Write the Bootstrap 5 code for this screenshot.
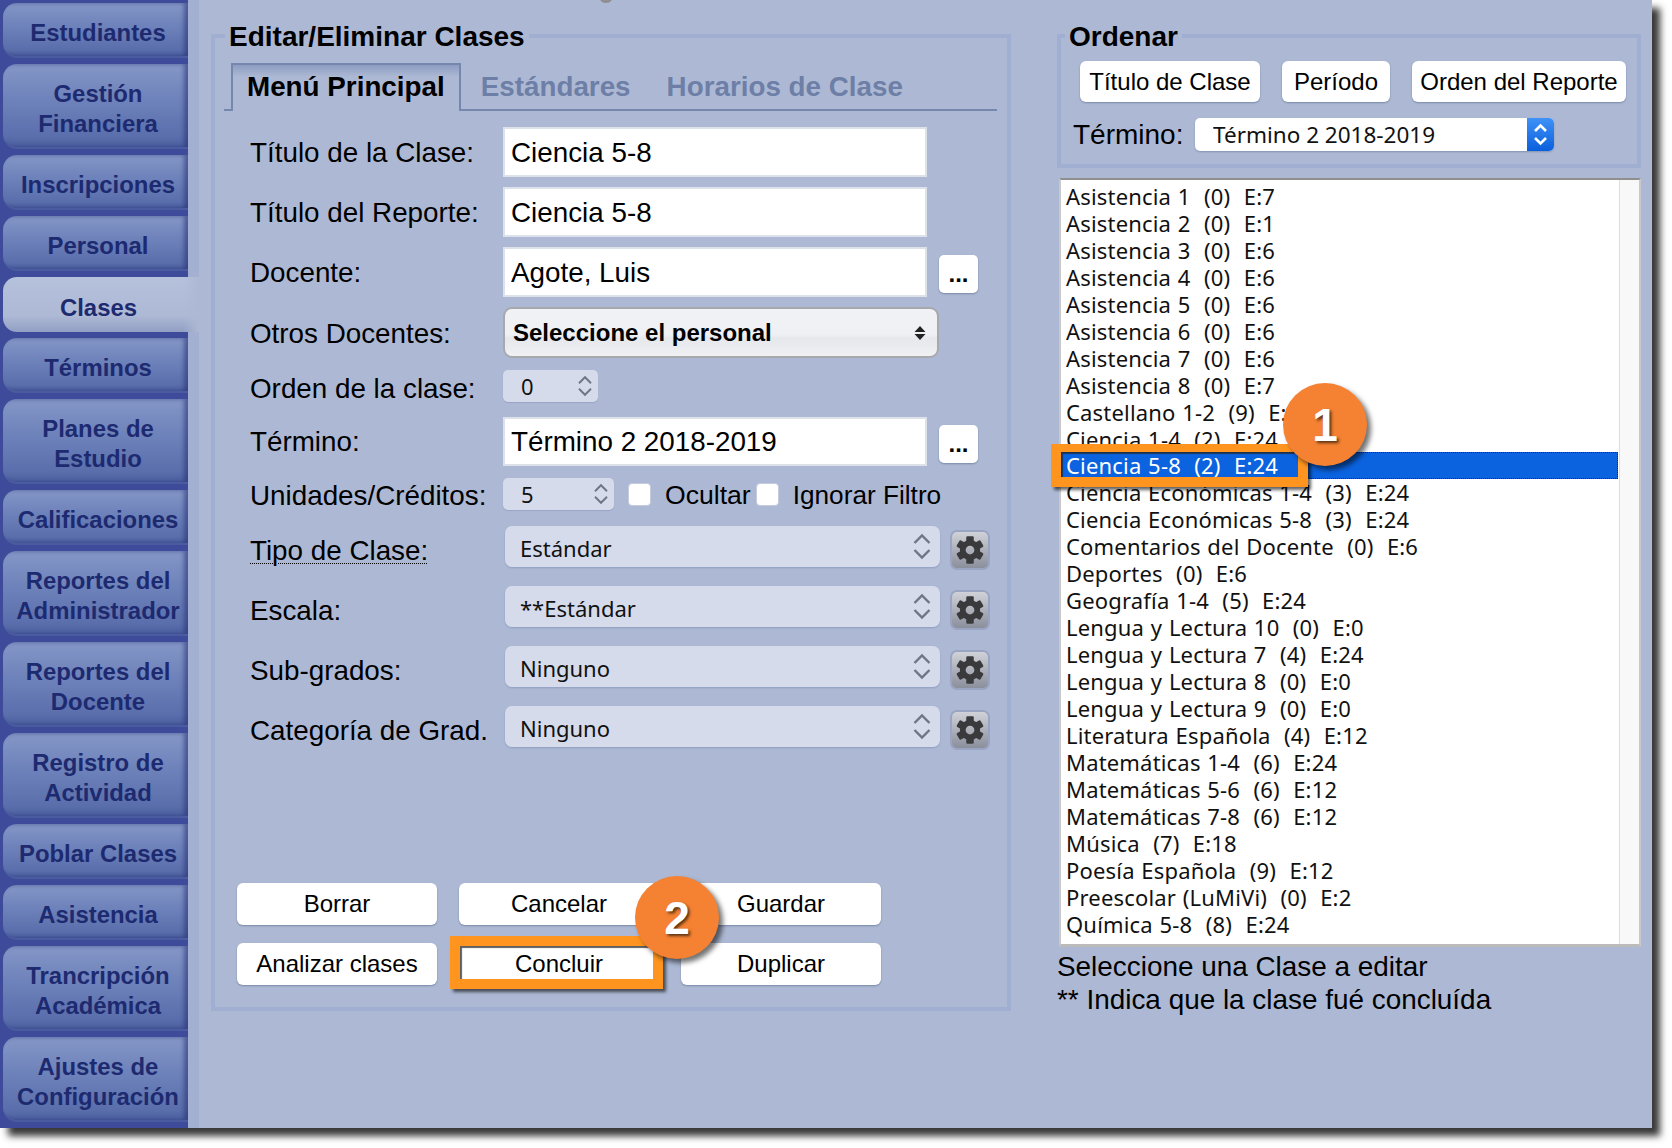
<!DOCTYPE html>
<html lang="es">
<head>
<meta charset="utf-8">
<title>Editar/Eliminar Clases</title>
<link rel="stylesheet" href="https://cdn.jsdelivr.net/npm/bootstrap@5.3.0/dist/css/bootstrap.min.css">
<style>
html,body{margin:0;background:#fff;overflow:hidden;height:100%}
body{font-family:"Liberation Sans",Arial,sans-serif;color:#000}
.app-win{width:1652px;height:1128px;background:#adb9d4;box-shadow:8px 8px 7px rgba(0,0,0,.78);position:relative}
.side-col{width:188px;background:#3d4b9a;padding:3px 0 0 3px;gap:6px;flex:none;position:relative;z-index:2}
.side-btn{height:55px;padding:7px 0 0 5px;font-size:23.9px;font-weight:700;line-height:30.5px;color:#1d2a70;text-align:center;text-decoration:none;border-radius:14px 0 0 14px;background:linear-gradient(#8597c7 0,#6d81ba 45%,#5a6eac 88%,#4b5e9e 100%);box-shadow:inset -4px 0 4px rgba(35,45,115,.55);border-bottom:2px solid #4a5b9f}
.side-btn.dbl{height:85px}
.side-btn.on{width:196px;padding-right:10px;background:linear-gradient(90deg,rgba(173,185,212,0) 92%,#adb9d4 100%),linear-gradient(#b6c1dc 0,#adb9d5 70%,#929fc3 100%);box-shadow:none;border-bottom:0;color:#1d2a70}
.main-col{flex:1;border-left:11px solid #a3b0d2;padding:20px 0 0 12px;gap:46px}
.fset{border:4px solid #a0aed1;margin:0;min-width:0}
.fset legend{float:none;width:auto;font-size:28px;font-weight:700;line-height:30px;margin:-2px 0 0 1px;padding:2px 4px 0}
.fset-a{width:800px;height:991px;padding:0 10px 22px 9px}
.col-b{width:584px;margin-top:0}
.fset-b{height:148px;padding:0 0 0 19px}
.fset-b legend{margin-left:-15px}
.tab-bar{margin-top:11px;height:48px;border-bottom:2px solid #7587ad;padding-left:7px;gap:4px;flex-wrap:nowrap}
.tab-bar .nav-link{font-size:27.8px;font-weight:700;line-height:44px;padding:2px 16px 0;color:#6d7fa6;border:0;white-space:nowrap}
.tab-bar .nav-link.active{color:#000;height:48px;border:2px solid #7587ad;border-bottom:0;background:linear-gradient(#8d9dc2 0,#adb9d4 12px);padding:0 14px}
.form-wrap{padding:16px 0 0 26px;flex:1}
.frow{margin-bottom:10px;height:50px}
.flab{width:253px;flex:none;font-size:27.8px;line-height:32px;white-space:nowrap;padding-top:2px}
.flab u{text-decoration:underline dotted 1px;text-underline-offset:3px}
.txt-in{width:424px;height:100%;flex:none;border:2px solid #dde1ea;border-radius:0;background:#fff;font-size:27.8px;padding:2px 6px 0;color:#000}
.dot-btn{width:39px;height:38px;margin:4px 0 0 12px;padding:0;background:#fff;border:0;border-radius:5px;box-shadow:0 1px 2px #7a88a8;font-weight:700;font-size:24px;line-height:32px;color:#000}
.r-otros{height:51px;margin-bottom:12px}
.r-num{height:32px;margin-bottom:15px}
.r-num .flab{padding-top:6px}
.r-term{height:49px;margin-bottom:12px}
.r-term .flab{padding-top:0}
.r-term .txt-in{padding-top:0}
.r-uni{height:32px;margin-bottom:16px}
.r-uni .flab{padding-top:4px}
.r-sel{height:41px;margin-bottom:19px}
.r-sel .flab{margin-top:7px}
.otros-sel{width:436px;height:51px;flex:none;border:2px solid #a7a9ad;border-radius:9px;font-size:24px;font-weight:700;padding:0 0 0 8px;color:#000;background:linear-gradient(#f1f2f5 0,#eff0f3 55%,#e6e7ea 62%,#f0f1f3 100%)}
.otros-wrap{position:relative}
.num-in{height:32px;border:0;border-radius:5px;background-color:#d5dbea;box-shadow:0 1px 1px #98a5c4;font-family:"Noto Sans",sans-serif;font-size:22px;padding:2px 0 0 18px;color:#111;flex:none}
.w95{width:95px}.w111{width:111px}
.num-wrap{position:relative;flex:none}
.chk-a{width:23px;height:23px;margin:0;border:1px solid #c4cbdc;border-radius:5px;background-color:#fff;flex:none}
.chk-gap{margin-left:14px}
.chk-t{font-size:26.6px;line-height:32px;white-space:nowrap;padding-top:2px}
.chk-sp{margin-left:14px;margin-right:5px}
.chk-lg{font-size:26.2px;margin-left:14px}
.pick-sel{width:435px;margin-left:2px;height:41px;flex:none;border:0;border-radius:7px;background-color:#d5dbea;background-image:none;box-shadow:0 1px 2px #8f9dbf;font-family:"Noto Sans",sans-serif;font-size:22px;padding:3px 0 0 15px;color:#111}
.sel-wrap{position:relative;flex:none}
.chev{position:absolute;pointer-events:none}
.chev-a{right:8px;top:6px;width:20px;height:29px}
.chev-b{right:5px;top:3px;width:16px;height:26px}
.chev-c{right:12px;top:18px;width:14px;height:16px}
.gear-btn{width:40px;height:40px;margin:4px 0 0 10px;padding:0;border:2px solid #99a5c2;border-radius:7px;background:linear-gradient(#d0d2d8,#8b8f9c);flex:none}
.gear-btn svg{width:30px;height:30px;display:block;margin:3px}
.act-btn{width:200px;height:42px;padding:0;background:#fff;border:0;border-radius:6px;box-shadow:0 1px 2px #7a88a8;font-size:24px;line-height:38px;color:#000}
.act-zone{margin-left:-13px;gap:18px 22px;width:664px}
.ord-btn{height:41px;padding:0;background:#fff;border:0;border-radius:6px;box-shadow:0 1px 2px #7a88a8;font-size:24px;line-height:36px;color:#000;white-space:nowrap}
.w180{width:180px}.w108{width:108px}.w214{width:214px}
.ord-row{gap:22px;margin:9px 0 0 0}
.term-line{margin:14px 0 0 -7px}
.term-lab{font-size:28px;line-height:34px;width:122px;flex:none;padding-top:2px}
.term-sel{width:359px;height:33px;border:0;border-radius:5px;padding:0 0 0 18px;font-family:"Noto Sans",sans-serif;font-size:22.5px;color:#111;background:#fff;box-shadow:0 1px 2px #8492b4}
.term-wrap{position:relative;width:359px}
.term-arrow{position:absolute;right:0;top:0;width:27px;height:33px;border-radius:0 5px 5px 0;background:linear-gradient(#3f92f7,#0a5fdc)}
.term-arrow svg{display:block;width:27px;height:33px}
.cls-list{margin:10px 0 0 2px;width:582px;height:769px;background:#fff;border-top:2px solid #8f8f8f;border-left:2px solid #c9c9c9;border-right:2px solid #c9c9c9;border-bottom:3px solid #bbb;border-radius:0;position:relative;padding:3px 0 0}
.cls-list::after{content:"";position:absolute;top:0;bottom:0;right:0;width:20px;background:#f8f8f8;border-left:1px solid #ddd}
.cls-list .list-group-item{background:transparent;border:0;border-radius:0;padding:0 0 0 5px;height:27px;line-height:27px;margin:0;font-family:"Noto Sans",sans-serif;font-size:22px;letter-spacing:.18px;word-spacing:.8px;color:#111;white-space:pre}
.cls-list .list-group-item.active{background:#0b63e0;color:#fff;width:557px;outline:1px dotted #0a1f7a;outline-offset:-1px;z-index:0}
.note-a{margin:3px 0 0 0;font-size:27.9px;line-height:33px}
.hl{position:absolute;border:10px solid #ff951f;box-shadow:3px 3px 3px rgba(0,0,0,.6),inset 2px 2px 1px rgba(40,40,40,.75);z-index:3}
.hl-a{left:1051px;top:444px;width:257px;height:43px;border-width:8px 10px 10px 10px}
.hl-b{left:450px;top:936px;width:213px;height:53px}
.mark-o{position:absolute;width:84px;height:83px;border-radius:50%;background:#f58233;color:#fff;font-weight:700;font-size:46px;line-height:85px;text-align:center;text-shadow:2px 2px 3px rgba(50,30,10,.8);box-shadow:4px 4px 5px rgba(0,0,0,.55);z-index:4}
.mark-a{left:1283px;top:383px}
.mark-b{left:635px;top:876px}
.top-dot{position:absolute;left:600px;top:-6px;width:12px;height:9px;border-radius:50%;background:#8f8f92}
</style>
</head>
<body>
<svg width="0" height="0" class="position-absolute">
  <symbol id="ud" viewBox="0 0 20 29"><path d="M2.5 11 10 3.5 17.5 11M2.5 18 10 25.5 17.5 18" fill="none" stroke="#6f7585" stroke-width="2.4"/></symbol>
  <symbol id="bu" viewBox="0 0 27 33"><path d="M8 13 13.5 7.5 19 13M8 20 13.5 25.5 19 20" fill="none" stroke="#fff" stroke-width="2.6"/></symbol>
  <symbol id="dbl" viewBox="0 0 14 16"><path d="M7 1 12.5 7H1.5ZM7 15 1.5 9H12.5Z" fill="#222"/></symbol>
  <symbol id="gr" viewBox="0 0 24 24">
    <g fill="#3a3a3c">
      <rect x="9" y="1" width="6" height="6" rx="1"/>
      <rect x="9" y="1" width="6" height="6" rx="1" transform="rotate(60 12 12)"/>
      <rect x="9" y="1" width="6" height="6" rx="1" transform="rotate(120 12 12)"/>
      <rect x="9" y="1" width="6" height="6" rx="1" transform="rotate(180 12 12)"/>
      <rect x="9" y="1" width="6" height="6" rx="1" transform="rotate(240 12 12)"/>
      <rect x="9" y="1" width="6" height="6" rx="1" transform="rotate(300 12 12)"/>
    </g>
    <circle cx="12" cy="12" r="5.8" fill="none" stroke="#3a3a3c" stroke-width="4.6"/>
  </symbol>
</svg>

<div class="app-win d-flex">
  <span class="top-dot"></span>
  <nav class="nav flex-column flex-nowrap side-col">
    <a class="side-btn d-flex align-items-center justify-content-center">Estudiantes</a>
    <a class="side-btn dbl d-flex align-items-center justify-content-center">Gestión<br>Financiera</a>
    <a class="side-btn d-flex align-items-center justify-content-center">Inscripciones</a>
    <a class="side-btn d-flex align-items-center justify-content-center">Personal</a>
    <a class="side-btn on d-flex align-items-center justify-content-center">Clases</a>
    <a class="side-btn d-flex align-items-center justify-content-center">Términos</a>
    <a class="side-btn dbl d-flex align-items-center justify-content-center">Planes de<br>Estudio</a>
    <a class="side-btn d-flex align-items-center justify-content-center">Calificaciones</a>
    <a class="side-btn dbl d-flex align-items-center justify-content-center">Reportes del<br>Administrador</a>
    <a class="side-btn dbl d-flex align-items-center justify-content-center">Reportes del<br>Docente</a>
    <a class="side-btn dbl d-flex align-items-center justify-content-center">Registro de<br>Actividad</a>
    <a class="side-btn d-flex align-items-center justify-content-center">Poblar Clases</a>
    <a class="side-btn d-flex align-items-center justify-content-center">Asistencia</a>
    <a class="side-btn dbl d-flex align-items-center justify-content-center">Trancripción<br>Académica</a>
    <a class="side-btn dbl d-flex align-items-center justify-content-center">Ajustes de<br>Configuración</a>
  </nav>

  <main class="main-col d-flex align-items-start">
    <fieldset class="fset fset-a d-flex flex-column">
      <legend>Editar/Eliminar Clases</legend>
      <ul class="nav tab-bar">
        <li class="nav-item"><a class="nav-link active">Menú Principal</a></li>
        <li class="nav-item"><a class="nav-link">Estándares</a></li>
        <li class="nav-item"><a class="nav-link">Horarios de Clase</a></li>
      </ul>
      <div class="form-wrap d-flex flex-column">
        <div class="frow d-flex align-items-center"><span class="flab">Título de la Clase:</span><input class="txt-in" value="Ciencia 5-8"></div>
        <div class="frow d-flex align-items-center"><span class="flab">Título del Reporte:</span><input class="txt-in" value="Ciencia 5-8"></div>
        <div class="frow d-flex align-items-center"><span class="flab">Docente:</span><input class="txt-in" value="Agote, Luis"><button class="dot-btn">...</button></div>
        <div class="r-otros d-flex align-items-center"><span class="flab">Otros Docentes:</span>
          <div class="otros-wrap"><select class="otros-sel form-select"><option>Seleccione el personal</option></select><svg class="chev chev-c"><use href="#dbl"/></svg></div></div>
        <div class="r-num d-flex align-items-center"><span class="flab">Orden de la clase:</span>
          <div class="num-wrap"><input class="num-in w95" value="0"><svg class="chev chev-b"><use href="#ud"/></svg></div></div>
        <div class="r-term d-flex align-items-center"><span class="flab">Término:</span><input class="txt-in" value="Término 2 2018-2019"><button class="dot-btn">...</button></div>
        <div class="r-uni d-flex align-items-center"><span class="flab">Unidades/Créditos:</span>
          <div class="num-wrap"><input class="num-in w111" value="5"><svg class="chev chev-b"><use href="#ud"/></svg></div>
          <input class="chk-a form-check-input chk-gap" type="checkbox"><span class="chk-t chk-sp">Ocultar</span>
          <input class="chk-a form-check-input" type="checkbox"><span class="chk-t chk-lg">Ignorar Filtro</span></div>
        <div class="r-sel d-flex align-items-start"><span class="flab"><u>Tipo de Clase:</u></span>
          <div class="sel-wrap"><select class="pick-sel form-select"><option>Estándar</option></select><svg class="chev chev-a"><use href="#ud"/></svg></div>
          <button class="gear-btn"><svg><use href="#gr"/></svg></button></div>
        <div class="r-sel d-flex align-items-start"><span class="flab">Escala:</span>
          <div class="sel-wrap"><select class="pick-sel form-select"><option>**Estándar</option></select><svg class="chev chev-a"><use href="#ud"/></svg></div>
          <button class="gear-btn"><svg><use href="#gr"/></svg></button></div>
        <div class="r-sel d-flex align-items-start"><span class="flab">Sub-grados:</span>
          <div class="sel-wrap"><select class="pick-sel form-select"><option>Ninguno</option></select><svg class="chev chev-a"><use href="#ud"/></svg></div>
          <button class="gear-btn"><svg><use href="#gr"/></svg></button></div>
        <div class="r-sel d-flex align-items-start"><span class="flab">Categoría de Grad.</span>
          <div class="sel-wrap"><select class="pick-sel form-select"><option>Ninguno</option></select><svg class="chev chev-a"><use href="#ud"/></svg></div>
          <button class="gear-btn"><svg><use href="#gr"/></svg></button></div>
        <div class="act-zone d-flex flex-wrap mt-auto">
          <button class="act-btn btn">Borrar</button>
          <button class="act-btn btn">Cancelar</button>
          <button class="act-btn btn">Guardar</button>
          <button class="act-btn btn">Analizar clases</button>
          <button class="act-btn btn">Concluir</button>
          <button class="act-btn btn">Duplicar</button>
        </div>
      </div>
    </fieldset>

    <div class="col-b">
      <fieldset class="fset fset-b">
        <legend>Ordenar</legend>
        <div class="ord-row d-flex">
          <button class="ord-btn btn w180">Título de Clase</button>
          <button class="ord-btn btn w108">Período</button>
          <button class="ord-btn btn w214">Orden del Reporte</button>
        </div>
        <div class="term-line d-flex align-items-center">
          <span class="term-lab">Término:</span>
          <div class="term-wrap"><select class="term-sel form-select"><option>Término 2 2018-2019</option></select><span class="term-arrow"><svg><use href="#bu"/></svg></span></div>
        </div>
      </fieldset>
      <div class="cls-list list-group">
        <div class="list-group-item">Asistencia 1  (0)  E:7</div>
        <div class="list-group-item">Asistencia 2  (0)  E:1</div>
        <div class="list-group-item">Asistencia 3  (0)  E:6</div>
        <div class="list-group-item">Asistencia 4  (0)  E:6</div>
        <div class="list-group-item">Asistencia 5  (0)  E:6</div>
        <div class="list-group-item">Asistencia 6  (0)  E:6</div>
        <div class="list-group-item">Asistencia 7  (0)  E:6</div>
        <div class="list-group-item">Asistencia 8  (0)  E:7</div>
        <div class="list-group-item">Castellano 1-2  (9)  E:12</div>
        <div class="list-group-item">Ciencia 1-4  (2)  E:24</div>
        <div class="list-group-item active">Ciencia 5-8  (2)  E:24</div>
        <div class="list-group-item">Ciencia Económicas 1-4  (3)  E:24</div>
        <div class="list-group-item">Ciencia Económicas 5-8  (3)  E:24</div>
        <div class="list-group-item">Comentarios del Docente  (0)  E:6</div>
        <div class="list-group-item">Deportes  (0)  E:6</div>
        <div class="list-group-item">Geografía 1-4  (5)  E:24</div>
        <div class="list-group-item">Lengua y Lectura 10  (0)  E:0</div>
        <div class="list-group-item">Lengua y Lectura 7  (4)  E:24</div>
        <div class="list-group-item">Lengua y Lectura 8  (0)  E:0</div>
        <div class="list-group-item">Lengua y Lectura 9  (0)  E:0</div>
        <div class="list-group-item">Literatura Española  (4)  E:12</div>
        <div class="list-group-item">Matemáticas 1-4  (6)  E:24</div>
        <div class="list-group-item">Matemáticas 5-6  (6)  E:12</div>
        <div class="list-group-item">Matemáticas 7-8  (6)  E:12</div>
        <div class="list-group-item">Música  (7)  E:18</div>
        <div class="list-group-item">Poesía Española  (9)  E:12</div>
        <div class="list-group-item">Preescolar (LuMiVi)  (0)  E:2</div>
        <div class="list-group-item">Química 5-8  (8)  E:24</div>
      </div>
      <div class="note-a">Seleccione una Clase a editar<br>** Indica que la clase fué concluída</div>
    </div>
  </main>

  <div class="hl hl-a"></div>
  <div class="hl hl-b"></div>
  <div class="mark-o mark-a">1</div>
  <div class="mark-o mark-b">2</div>
</div>
<script src="https://cdn.jsdelivr.net/npm/bootstrap@5.3.0/dist/js/bootstrap.bundle.min.js"></script>
</body>
</html>
